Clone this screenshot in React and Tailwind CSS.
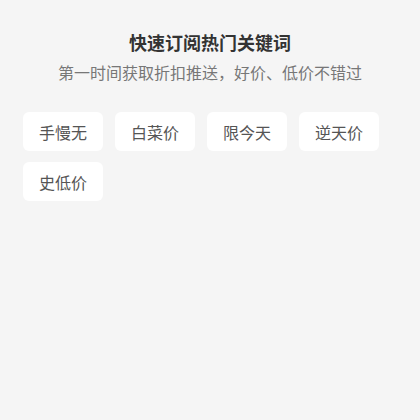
export default function App() {
  const tags = ["手慢无", "白菜价", "限今天", "逆天价", "史低价"];
  return (
    <div
      className="w-[420px] h-[420px] bg-[#f5f5f5] pt-[29px]"
      style={{ fontFamily: '"Noto Sans CJK SC", "Noto Sans", sans-serif' }}
    >
      <div className="text-center text-[18px] leading-[26px] font-bold text-[#333333]">
        快速订阅热门关键词
      </div>
      <div className="mt-[5px] text-center text-[16px] leading-[24px] text-[#777777]">
        第一时间获取折扣推送，好价、低价不错过
      </div>
      <div className="mt-[28px] px-[23px] flex flex-wrap gap-x-[12px] gap-y-[11px]">
        {tags.map((t) => (
          <div
            key={t}
            className="w-[80px] h-[39px] bg-white rounded-[6px] flex items-center justify-center text-[16px] text-[#555555]"
          >
            {t}
          </div>
        ))}
      </div>
    </div>
  );
}
